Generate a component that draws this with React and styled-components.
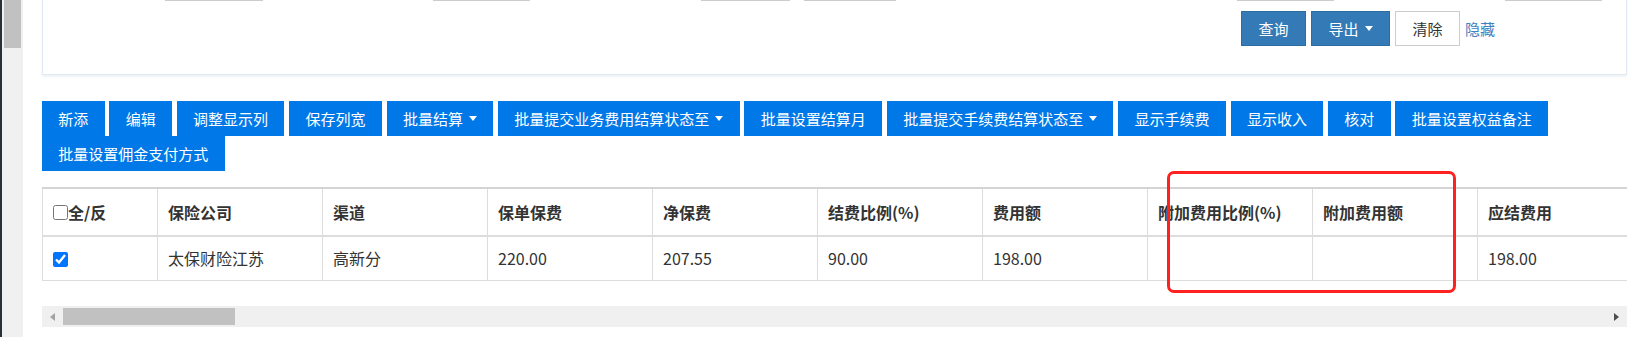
import styled, { createGlobalStyle } from "styled-components";

const GlobalStyle = createGlobalStyle`
  html, body {
    margin: 0;
    padding: 0;
    height: 100%;
    overflow: hidden;
    background: #fff;
  }
  body {
    font-family: "Microsoft YaHei", "Noto Sans CJK SC", "Noto Sans", sans-serif;
    color: #333;
  }
  #root {
    height: 100%;
  }
`;

const Page = styled.div`
  display: flex;
  height: 100%;
`;

const SideRail = styled.div`
  flex: none;
  display: flex;
  width: 23px;
  height: 100%;
`;

const DarkEdge = styled.div`
  width: 2px;
  background: #2b3036;
`;

const Gutter = styled.div`
  width: 21px;
  background: #f0f0f0;
  padding-left: 2px;
  box-sizing: border-box;
`;

const RailThumb = styled.div`
  width: 17px;
  height: 48px;
  background: #c1c1c1;
`;

const Main = styled.main`
  flex: 1;
  min-width: 0;
  position: relative;
  padding: 0 12px 0 19px;
`;

const FilterPanel = styled.section`
  margin-top: -36px;
  border: 1px solid #e0e9f2;
  box-shadow: 0 2px 2px rgba(30, 70, 120, 0.07);
  overflow: hidden;
  padding-bottom: 28px;
`;

const FieldGrid = styled.div`
  display: grid;
  grid-template-columns: repeat(6, 268px);
  height: 36px;
`;

const Field = styled.div`
  display: flex;
  padding-left: 122px;
  gap: 14px;
`;

const Stub = styled.input`
  box-sizing: border-box;
  width: ${(p) => p.$w}px;
  height: 36px;
  margin: 0;
  border: 1px solid #ccc;
  background: #fff;
`;

const ActionRow = styled.div`
  display: flex;
  align-items: center;
  gap: 5px;
  margin-top: 10px;
  padding-left: 1198px;
`;

const PanelButton = styled.button`
  box-sizing: border-box;
  height: 35px;
  padding: 0 16.5px;
  display: inline-flex;
  align-items: center;
  font-family: inherit;
  font-size: 15px;
  line-height: 20px;
  white-space: nowrap;
  border: 1px solid ${(p) => (p.$plain ? "#ccc" : "#2e6da4")};
  background: ${(p) => (p.$plain ? "#fff" : "#337ab7")};
  color: ${(p) => (p.$plain ? "#333" : "#fff")};
`;

const HideLink = styled.a`
  font-size: 15px;
  line-height: 20px;
  color: #3f82c0;
  text-decoration: none;
`;

const Caret = styled.span`
  display: inline-block;
  width: 0;
  height: 0;
  margin-left: 6px;
  border-top: 5px solid currentColor;
  border-left: 4.5px solid transparent;
  border-right: 4.5px solid transparent;
`;

const Toolbar = styled.div`
  display: flex;
  flex-wrap: wrap;
  column-gap: 4.8px;
  margin-top: 26px;
`;

const ToolButton = styled.button`
  height: 35px;
  padding: 0 16.3px;
  display: inline-flex;
  align-items: center;
  border: none;
  background: #0078e7;
  color: #fff;
  font-family: inherit;
  font-size: 15px;
  line-height: 20px;
  white-space: nowrap;
`;

const TableViewport = styled.div`
  margin-top: 16px;
  overflow: hidden;
`;

const Grid = styled.table`
  border-collapse: collapse;
  table-layout: fixed;
  width: 1600px;
  border-top: 2px solid #d4d4d4;
`;

const HeadCell = styled.th`
  border: 1px solid #ddd;
  border-top: 2px solid #d4d4d4;
  border-bottom: 2px solid #ddd;
  padding: 12px 10px;
  font-size: 16px;
  line-height: 22px;
  font-weight: bold;
  text-align: left;
  color: #333;
  white-space: nowrap;
`;

const Cell = styled.td`
  border: 1px solid #ddd;
  padding: 10px;
  font-size: 16px;
  line-height: 23px;
  color: #333;
  white-space: nowrap;
`;

const Check = styled.input`
  width: 15px;
  height: 15px;
  margin: 0;
  vertical-align: ${(p) => (p.$head ? "-1px" : "-2px")};
`;

const HScroll = styled.div`
  display: flex;
  align-items: center;
  height: 21px;
  margin-top: 25px;
  background: #f0f0f0;
`;

const Arrow = styled.span`
  width: 0;
  height: 0;
  border-top: 4.5px solid transparent;
  border-bottom: 4.5px solid transparent;
  ${(p) =>
    p.$dir === "left"
      ? `margin-left: 8px; border-right: 5px solid #a3a3a3;`
      : `margin-left: auto; margin-right: 8px; border-left: 5px solid #505050;`}
`;

const ScrollThumb = styled.div`
  width: 172px;
  height: 17px;
  margin-left: 8px;
  background: #c1c1c1;
`;

const Annotation = styled.div`
  position: absolute;
  top: 171px;
  left: 1144px;
  width: 289px;
  height: 122px;
  box-sizing: border-box;
  border: 3.5px solid #ff2020;
  border-radius: 7px;
  pointer-events: none;
`;

const tools = [
  { label: "新添" },
  { label: "编辑" },
  { label: "调整显示列" },
  { label: "保存列宽" },
  { label: "批量结算", menu: true },
  { label: "批量提交业务费用结算状态至", menu: true },
  { label: "批量设置结算月" },
  { label: "批量提交手续费结算状态至", menu: true },
  { label: "显示手续费" },
  { label: "显示收入" },
  { label: "核对" },
  { label: "批量设置权益备注" },
  { label: "批量设置佣金支付方式" },
];

const columns = [
  "保险公司",
  "渠道",
  "保单保费",
  "净保费",
  "结费比例(%)",
  "费用额",
  "附加费用比例(%)",
  "附加费用额",
  "应结费用",
];

const rows = [
  ["太保财险江苏", "高新分", "220.00", "207.55", "90.00", "198.00", "", "", "198.00"],
];

export default function App() {
  return (
    <>
      <GlobalStyle />
      <Page>
        <SideRail>
          <DarkEdge />
          <Gutter>
            <RailThumb />
          </Gutter>
        </SideRail>

        <Main>
          <FilterPanel>
            <FieldGrid>
              <Field>
                <Stub $w={98} />
              </Field>
              <Field>
                <Stub $w={97} />
              </Field>
              <Field>
                <Stub $w={89} />
                <Stub $w={92} />
              </Field>
              <Field />
              <Field>
                <Stub $w={97} />
              </Field>
              <Field>
                <Stub $w={97} />
              </Field>
            </FieldGrid>
            <ActionRow>
              <PanelButton>查询</PanelButton>
              <PanelButton>
                导出
                <Caret />
              </PanelButton>
              <PanelButton $plain>清除</PanelButton>
              <HideLink href="#">隐藏</HideLink>
            </ActionRow>
          </FilterPanel>

          <Toolbar>
            {tools.map((t) => (
              <ToolButton key={t.label}>
                {t.label}
                {t.menu && <Caret />}
              </ToolButton>
            ))}
          </Toolbar>

          <TableViewport>
            <Grid>
              <colgroup>
                <col style={{ width: 115 }} />
                {columns.map((c) => (
                  <col key={c} style={{ width: 165 }} />
                ))}
              </colgroup>
              <thead>
                <tr>
                  <HeadCell>
                    <Check type="checkbox" $head />全/反
                  </HeadCell>
                  {columns.map((c) => (
                    <HeadCell key={c}>{c}</HeadCell>
                  ))}
                </tr>
              </thead>
              <tbody>
                {rows.map((r, i) => (
                  <tr key={i}>
                    <Cell>
                      <Check type="checkbox" defaultChecked />
                    </Cell>
                    {r.map((v, j) => (
                      <Cell key={j}>{v}</Cell>
                    ))}
                  </tr>
                ))}
              </tbody>
            </Grid>
          </TableViewport>

          <HScroll>
            <Arrow $dir="left" />
            <ScrollThumb />
            <Arrow $dir="right" />
          </HScroll>

          <Annotation />
        </Main>
      </Page>
    </>
  );
}
